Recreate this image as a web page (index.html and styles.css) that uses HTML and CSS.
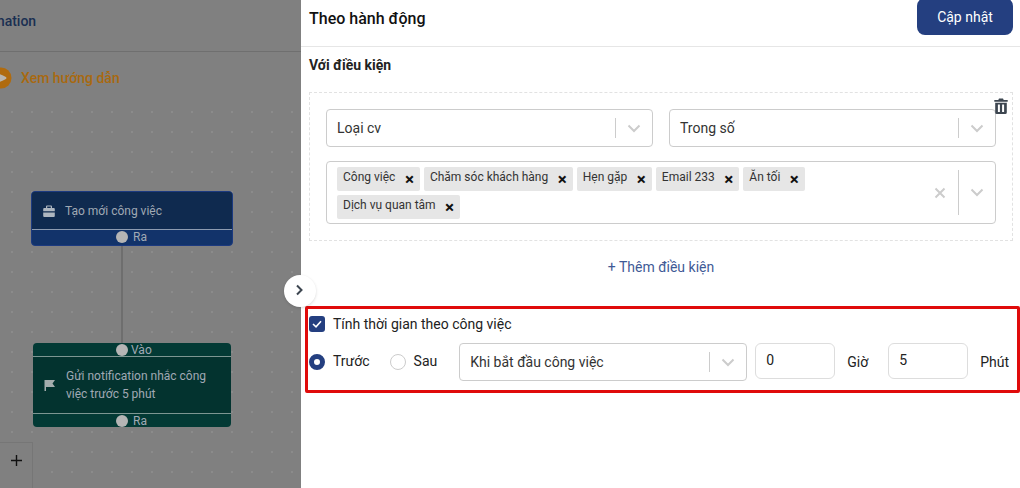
FILE: index.html
```html
<!DOCTYPE html>
<html lang="en">
<head>
  <meta charset="UTF-8">
  <meta name="viewport" content="width=device-width, initial-scale=1.0">
  <title>Theo hành động</title>
  <link rel="stylesheet" href="styles.css">
</head>
<body>
  <div class="page">
    <div class="canvas">
      <div class="canvas-header"><span class="canvas-title">Automation</span></div>
      <div class="guide">
        <svg class="guide-icon" width="22" height="22" viewBox="0 0 22 22"><circle cx="11" cy="11" r="10.500" fill="#b06b0e"/><path d="M3 7c4-1 8 0 12 2.500 2 1 2 2 0 3C11 15 7 16 3 15z" fill="#b9b5ae"/></svg>
        <span>Xem hướng dẫn</span>
      </div>

      <div class="link"></div>

      <div class="node node-start">
        <div class="node-body">
          <svg class="node-icon" width="12" height="12" viewBox="0 0 12 12"><path d="M4 .5h4a1 1 0 0 1 1 1V3h1.800a1 1 0 0 1 1 1v2.300H.2V4a1 1 0 0 1 1-1H3V1.500a1 1 0 0 1 1-1zm.2 1.100V3h3.600V1.600z" fill="#aeb6c0"/><path d="M.2 7.400h11.600V11a1 1 0 0 1-1 1H1.200a1 1 0 0 1-1-1z" fill="#aeb6c0"/></svg>
          <span>Tạo mới công việc</span>
        </div>
        <div class="port"><i class="port-dot"></i>Ra</div>
      </div>

      <div class="node node-notify">
        <div class="port port-in"><i class="port-dot"></i>Vào</div>
        <div class="node-body">
          <svg class="node-icon" width="12" height="12" viewBox="0 0 12 12"><path d="M.5 1h10.500L8.500 4.500 11 8H2v4H.5z" fill="#a4adad"/></svg>
          <span>Gửi notification nhắc công việc trước 5 phút</span>
        </div>
        <div class="port"><i class="port-dot"></i>Ra</div>
      </div>

      <div class="zoom-btn">
        <svg width="13" height="13" viewBox="0 0 13 13"><path d="M6.500 1v11M1 6.500h11" stroke="#111" stroke-width="1.400"/></svg>
      </div>
    </div>

    <div class="panel">
      <button class="collapse-btn" type="button">
        <svg width="10" height="12" viewBox="0 0 10 12"><path d="M2 1.500L6.500 6 2 10.500" fill="none" stroke="#3d4650" stroke-width="2"/></svg>
      </button>

      <div class="panel-header">
        <h1>Theo hành động</h1>
        <button class="save-btn" type="button">Cập nhật</button>
      </div>

      <div class="panel-body">
        <h2>Với điều kiện</h2>

        <div class="condition">
          <svg class="trash" width="14" height="16" viewBox="0 0 14 16"><path d="M.3 2h4L5 .5h4L9.700 2h4v1.800H.3zM1.200 4.800h11.600V14.500a1.500 1.500 0 0 1-1.500 1.500H2.700a1.500 1.500 0 0 1-1.500-1.500zm2.700 1.700v7.500h2V6.500zm4.200 0v7.500h2V6.500z" fill="#3d4650"/></svg>

          <div class="condition-row">
            <div class="select">
              <span class="select-value">Loại cv</span>
              <span class="select-sep"></span>
              <svg class="chevron" width="14" height="9" viewBox="0 0 14 9"><path d="M1.500 1.500L7 7l5.500-5.500" fill="none" stroke="#ccc" stroke-width="2"/></svg>
            </div>
            <div class="select">
              <span class="select-value">Trong số</span>
              <span class="select-sep"></span>
              <svg class="chevron" width="14" height="9" viewBox="0 0 14 9"><path d="M1.500 1.500L7 7l5.500-5.500" fill="none" stroke="#ccc" stroke-width="2"/></svg>
            </div>
          </div>

          <div class="multi">
            <div class="tags">
              <span class="tag">Công việc<b class="tag-x">×</b></span>
              <span class="tag">Chăm sóc khách hàng<b class="tag-x">×</b></span>
              <span class="tag">Hẹn gặp<b class="tag-x">×</b></span>
              <span class="tag">Email 233<b class="tag-x">×</b></span>
              <span class="tag">Ăn tối<b class="tag-x">×</b></span>
              <span class="tag">Dịch vụ quan tâm<b class="tag-x">×</b></span>
            </div>
            <svg class="clear" width="12" height="12" viewBox="0 0 12 12"><path d="M1.500 1.500l9 9M10.500 1.500l-9 9" stroke="#ccc" stroke-width="2"/></svg>
            <span class="select-sep multi-sep"></span>
            <svg class="chevron" width="14" height="9" viewBox="0 0 14 9"><path d="M1.500 1.500L7 7l5.500-5.500" fill="none" stroke="#ccc" stroke-width="2"/></svg>
          </div>
        </div>

        <div class="add-link">+ Thêm điều kiện</div>

        <div class="timing">
          <div class="timing-check">
            <span class="checkbox">
              <svg width="10" height="8" viewBox="0 0 10 8"><path d="M1 4l3 2.800L9 1.200" fill="none" stroke="#fff" stroke-width="1.600"/></svg>
            </span>
            <span>Tính thời gian theo công việc</span>
          </div>
          <div class="timing-row">
            <span class="radio radio-on"></span>
            <span class="radio-label radio-label-first">Trước</span>
            <span class="radio"></span>
            <span class="radio-label">Sau</span>
            <div class="select select-time">
              <span class="select-value">Khi bắt đầu công việc</span>
              <span class="select-sep"></span>
              <svg class="chevron" width="14" height="9" viewBox="0 0 14 9"><path d="M1.500 1.500L7 7l5.500-5.500" fill="none" stroke="#ccc" stroke-width="2"/></svg>
            </div>
            <div class="num-input">0</div>
            <span class="unit">Giờ</span>
            <div class="num-input">5</div>
            <span class="unit">Phút</span>
          </div>
        </div>
      </div>
    </div>
  </div>
</body>
</html>
```

FILE: styles.css
```css
* {
  box-sizing: border-box;
}
html, body {
  margin: 0;
  height: 100%;
}
body {
  font-family: Roboto, "Liberation Sans", sans-serif;
  font-size: 14px;
  color: #333;
  overflow: hidden;
}
.page {
  display: flex;
  width: 1020px;
  height: 488px;
}

/* dimmed canvas on the left */
.canvas {
  position: relative;
  width: 301px;
  flex: none;
  overflow: hidden;
  background-color: #808080;
  background-image: radial-gradient(circle, #8b8b8b 0.8px, transparent 1px);
  background-size: 20px 20px;
  background-position: 2px 2px;
}
.canvas-header {
  height: 52px;
  padding-top: 13px;
  background: #808080;
  border-bottom: 1px solid #6f6f6f;
  font-weight: 500;
  color: #1a2f52;
  white-space: nowrap;
}
.canvas-title {
  display: inline-block;
  margin-left: -37px;
}
.guide {
  display: flex;
  align-items: center;
  gap: 9px;
  height: 52px;
  margin-left: -10px;
  background: #808080;
  font-weight: 500;
  color: #a9690f;
}
.node {
  position: absolute;
  border-radius: 4px;
  font-size: 12px;
  color: #a0a9b4;
}
.node-start {
  left: 31px;
  top: 191px;
  width: 202px;
  height: 55px;
  background: #12336a;
  border: 1px solid #1c3a80;
}
.node-start .node-body {
  height: 38px;
  background: #0f2a4f;
  border-bottom: 1px solid #8d9bb0;
  border-radius: 3px 3px 0 0;
}
.node-start .port {
  gap: 5px;
  padding-left: 84px;
}
.node-notify {
  left: 33px;
  top: 343px;
  width: 198px;
  height: 84px;
  background: #033a35;
}
.node-notify .node-body {
  height: 58px;
  background: #03332f;
  border-top: 1px solid #7d9692;
  border-bottom: 1px solid #7d9692;
  line-height: 18px;
}
.node-notify .port {
  gap: 5px;
  padding-left: 83px;
}
.node-notify .port-in {
  gap: 3px;
}
.node-body {
  display: flex;
  align-items: center;
  gap: 10px;
  padding: 0 11px;
}
.node-icon {
  flex: none;
}
.port {
  display: flex;
  align-items: center;
  height: 14px;
  line-height: 14px;
}
.port-in {
  height: 13px;
  padding-top: 1px;
}
.port-dot {
  width: 12px;
  height: 12px;
  border-radius: 50%;
  background: #b5b5b5;
}
.link {
  position: absolute;
  left: 121px;
  top: 246px;
  width: 2px;
  height: 97px;
  background: #6e6e6e;
}
.zoom-btn {
  position: absolute;
  left: -1px;
  top: 442px;
  width: 34px;
  height: 47px;
  padding: 11px 0 0 10px;
  background: #808080;
  border: 1px solid #767676;
}

/* side panel */
.panel {
  position: relative;
  flex: 1;
  min-width: 0;
  background: #fff;
}
.collapse-btn {
  position: absolute;
  left: -17px;
  top: 275px;
  width: 32px;
  height: 32px;
  padding: 0;
  border: none;
  border-radius: 50%;
  background: #fff;
  box-shadow: 0 1px 3px rgba(0, 0, 0, 0.15);
  z-index: 2;
}
.panel-header {
  display: flex;
  justify-content: space-between;
  align-items: flex-start;
  height: 47px;
  padding: 0 7px 0 8px;
  border-bottom: 1px solid #e6e6e6;
}
.panel-header h1 {
  margin: 9px 0 0;
  font-size: 16px;
  font-weight: 500;
  line-height: 19px;
  color: #111;
}
.save-btn {
  width: 96px;
  height: 37px;
  margin-top: -2px;
  padding: 1px 0 0;
  border: none;
  border-radius: 8px;
  background: #243f80;
  color: #fff;
  font-family: inherit;
  font-size: 14px;
}
.panel-body {
  padding: 0 7px 0 8px;
}
.panel-body h2 {
  margin: 10px 0 19px;
  font-size: 14px;
  font-weight: 700;
  line-height: 16px;
  color: #222;
}
.condition {
  position: relative;
  height: 149px;
  padding: 16px 16px 0;
  border: 1px dashed #e2e2e2;
}
.trash {
  position: absolute;
  right: 4px;
  top: 5px;
}
.condition-row {
  display: flex;
  gap: 16px;
}
.select {
  display: flex;
  align-items: center;
  flex: 1;
  height: 38px;
  padding-left: 10px;
  background: #fff;
  border: 1px solid #ccc;
  border-radius: 4px;
}
.select-value {
  flex: 1;
  color: #333;
}
.select-sep {
  flex: none;
  width: 1px;
  height: 20px;
  background: #ccc;
  margin-right: 11px;
}
.chevron {
  flex: none;
  margin-right: 11px;
}
.multi {
  display: flex;
  align-items: center;
  height: 63px;
  margin-top: 14px;
  padding: 0 0 0 10px;
  border: 1px solid #ccc;
  border-radius: 4px;
}
.tags {
  display: flex;
  flex-wrap: wrap;
  gap: 4px;
  width: 580px;
  flex: none;
  margin-right: auto;
}
.tag {
  display: flex;
  align-items: flex-start;
  height: 24px;
  padding: 0 6px;
  background: #e6e6e6;
  border-radius: 2px;
  font-size: 12px;
  line-height: 21px;
  color: #333;
}
.tag-x {
  margin: 4px 0 0 9.5px;
  font-size: 17px;
  line-height: 17px;
  color: #111;
}
.clear {
  flex: none;
  margin: 0 12px 0 8px;
}
.multi-sep {
  height: 45px;
}
.add-link {
  margin-top: 17px;
  text-align: center;
  line-height: 18px;
  color: #3f5a96;
}

/* timing section, outlined in red in the screenshot */
.timing {
  height: 87px;
  margin: 30px -7px 0 -4px;
  padding: 7px 0 0 1px;
  border: 3px solid #e00b0b;
  border-radius: 2px;
  color: #222;
}
.timing-check {
  display: flex;
  align-items: center;
  gap: 8px;
  height: 16px;
}
.checkbox {
  display: flex;
  justify-content: center;
  align-items: center;
  width: 16px;
  height: 16px;
  background: #243f80;
  border-radius: 3px;
}
.timing-row {
  display: flex;
  align-items: center;
  height: 38px;
  margin-top: 11px;
}
.radio {
  flex: none;
  width: 16px;
  height: 16px;
  border: 1px solid #ccc;
  border-radius: 50%;
  background: #fff;
}
.radio-on {
  border: 5px solid #243f80;
}
.radio-label {
  margin-left: 8px;
  margin-right: 22px;
  padding-bottom: 2px;
}
.radio-label-first {
  margin-right: 20px;
}
.select-time {
  flex: none;
  width: 288px;
  margin-right: 8px;
}
.num-input {
  width: 80px;
  height: 36px;
  margin-bottom: 2px;
  padding: 7px 10px 0;
  border: 1px solid #ddd;
  border-radius: 6px;
  line-height: 18px;
}
.unit {
  margin: 0 20px 0 12px;
}
.unit:last-child {
  margin-right: 0;
}
```
